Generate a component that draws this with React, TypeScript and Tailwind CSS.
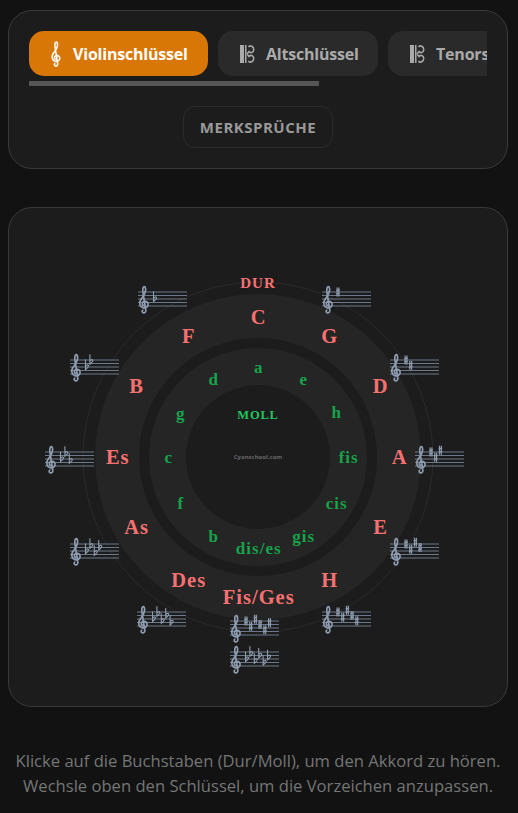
import React from "react";

const trebleD =
  "M6.2 13.6C4.2 13.6 3.4 10.6 5.6 9.6C8.6 8.4 10.6 11 10 13.4C9.4 15.6 6.6 16.4 4.4 15.4C1.8 14.2 1 11 2.6 8C3.8 5.6 7.2 3 7.6 -1.6C7.8 -4 7 -5.6 6.2 -5.4C5 -5.2 4.4 -2.6 5 .6L7.8 18C8.2 20.4 6.4 21.2 5 20.6C3.8 20 3.8 18 5.4 18";

const SHARP_Y = [0, 5.25, -1.75, 3.5, 8.75, 1.75, 7];
const FLAT_Y = [7, 1.75, 8.75, 3.5, 10.5, 5.25];

const major = [
  { t: "C", x: 0, y: -140 },
  { t: "F", x: -70, y: -121 },
  { t: "G", x: 71, y: -121 },
  { t: "B", x: -122, y: -71 },
  { t: "D", x: 122, y: -71 },
  { t: "Es", x: -141, y: 0 },
  { t: "A", x: 141, y: 0 },
  { t: "As", x: -122, y: 70 },
  { t: "E", x: 122, y: 70 },
  { t: "Des", x: -70, y: 123 },
  { t: "H", x: 71, y: 123 },
  { t: "Fis/Ges", x: 0, y: 140 },
];

const minor = [
  { t: "a", x: 0, y: -90 },
  { t: "d", x: -45, y: -78 },
  { t: "e", x: 45, y: -78 },
  { t: "g", x: -78, y: -44 },
  { t: "h", x: 78, y: -45 },
  { t: "c", x: -90, y: 0 },
  { t: "fis", x: 90, y: 0 },
  { t: "f", x: -78, y: 46 },
  { t: "cis", x: 78, y: 46 },
  { t: "b", x: -45, y: 79 },
  { t: "gis", x: 45, y: 79 },
  { t: "dis/es", x: 0, y: 91 },
];

// x, y = top-left of the staff, relative to the wheel centre
const staves = [
  { x: -120, y: -165, flats: 1, sharps: 0 },
  { x: 64, y: -165, flats: 0, sharps: 1 },
  { x: -188, y: -97, flats: 2, sharps: 0 },
  { x: 132, y: -97, flats: 0, sharps: 2 },
  { x: -213, y: -5, flats: 3, sharps: 0 },
  { x: 157, y: -5, flats: 0, sharps: 3 },
  { x: -188, y: 87, flats: 4, sharps: 0 },
  { x: 132, y: 87, flats: 0, sharps: 4 },
  { x: -121, y: 155, flats: 5, sharps: 0 },
  { x: 64, y: 155, flats: 0, sharps: 5 },
  { x: -28, y: 164, flats: 0, sharps: 6 },
  { x: -28, y: 195, flats: 6, sharps: 0 },
];

function Staff({ x, y, flats, sharps }: { x: number; y: number; flats: number; sharps: number }) {
  return (
    <g transform={`translate(${x} ${y})`}>
      {[0, 3.5, 7, 10.5, 14].map((l) => (
        <line key={l} x1="0" x2="49" y1={l} y2={l} stroke="#6b7889" strokeWidth="1" />
      ))}
      <path d={trebleD} fill="none" stroke="#8f9db0" strokeWidth="1.7" />
      {FLAT_Y.slice(0, flats).map((fy, i) => (
        <path
          key={i}
          transform={`translate(${15.5 + i * 4.4} ${fy})`}
          d="M0 -7.5V2.5C1.6 1.2 3.4 -.2 3 -1.4C2.6 -2.8 .9 -1.9 0 -.8"
          fill="none"
          stroke="#8f9db0"
          strokeWidth="1.1"
        />
      ))}
      {SHARP_Y.slice(0, sharps).map((sy, i) => (
        <path
          key={i}
          transform={`translate(${16 + i * 4.7} ${sy})`}
          d="M-.9 -4.5V4.5M.9 -4.5V4.5M-1.8 -1.2L1.8 -2.2M-1.8 2.2L1.8 1.2"
          fill="none"
          stroke="#8f9db0"
          strokeWidth="1.2"
        />
      ))}
    </g>
  );
}

function Wheel() {
  return (
    <svg width="498" height="498" viewBox="-249 -249 498 498" className="font-['Liberation_Serif',serif] font-bold">
      <circle r="175" fill="none" stroke="#2a2a2a" strokeWidth="1" />
      <circle r="163" fill="#252525" />
      <circle r="119" fill="#1c1c1c" />
      <circle r="109" fill="#252525" />
      <circle r="72" fill="#1c1c1c" />
      {staves.map((s) => (
        <Staff key={`${s.x}${s.y}`} {...s} />
      ))}
      <text y="-174" textAnchor="middle" dominantBaseline="central" className="fill-[#f87171] text-[15px] tracking-[1px]">
        DUR
      </text>
      <text y="-42" textAnchor="middle" dominantBaseline="central" className="fill-[#22c55e] text-[12.5px] tracking-[0.8px]">
        MOLL
      </text>
      <text textAnchor="middle" dominantBaseline="central" className="fill-[#666666] text-[6px] font-['Open_Sans',sans-serif]">
        Cyanschool.com
      </text>
      {major.map((m) => (
        <text key={m.t} x={m.x + 0.7} y={m.y} textAnchor="middle" dominantBaseline="central" className="fill-[#f87171] text-[20.5px] tracking-[1px]">
          {m.t}
        </text>
      ))}
      {minor.map((m) => (
        <text key={m.t} x={m.x + 0.7} y={m.y} textAnchor="middle" dominantBaseline="central" className="fill-[#16a34a] text-[17px] tracking-[1px]">
          {m.t}
        </text>
      ))}
    </svg>
  );
}

function TrebleIcon() {
  return (
    <svg width="14" height="26" viewBox="0 -6.5 12 28.5" className="shrink-0">
      <path d={trebleD} fill="none" stroke="#ffffff" strokeWidth="1.7" />
    </svg>
  );
}

function CClefIcon() {
  return (
    <svg width="18" height="20" viewBox="0 0 18 20" className="shrink-0">
      <rect x="2" y="1" width="4" height="18" fill="#aaaaaa" />
      <rect x="7" y="1" width="1.5" height="18" fill="#aaaaaa" />
      <path
        d="M9 10L11 7.5C12 9 15.5 9.5 15.7 5.5C15.8 2.5 12 .6 10.5 3M9 10L11 12.5C12 11 15.5 10.5 15.7 14.5C15.8 17.5 12 19.4 10.5 17"
        fill="none"
        stroke="#aaaaaa"
        strokeWidth="1.5"
      />
    </svg>
  );
}

function ClefTab({ label, active, icon, width }: { label: string; active?: boolean; icon: React.ReactNode; width: string }) {
  return (
    <button
      className={`flex h-[45px] shrink-0 items-center gap-[10px] rounded-[15px] px-5 text-[16px] font-bold tracking-[-0.2px] ${width} ${
        active ? "bg-[#d97706] text-white" : "bg-[#2a2a2a] text-[#aaaaaa]"
      }`}
    >
      {icon}
      {label}
    </button>
  );
}

export default function App() {
  return (
    <div className="min-h-screen bg-[#121212] pl-2 pr-[10px] pt-[10px] font-['Open_Sans',sans-serif]">
      <section className="rounded-[24px] border border-[#3a3a3a] bg-[#1c1c1c] p-5">
        <div className="overflow-hidden">
          <div className="flex gap-[10px]">
            <ClefTab label="Violinschlüssel" active icon={<TrebleIcon />} width="w-[179px]" />
            <ClefTab label="Altschlüssel" icon={<CClefIcon />} width="w-[160px]" />
            <ClefTab label="Tenorschlüssel" icon={<CClefIcon />} width="w-[176px]" />
          </div>
        </div>
        <div className="mt-[5px] h-[5px] w-[290px] bg-[#555555]" />
        <div className="mt-5 flex justify-center">
          <button className="h-[42px] w-[150px] rounded-[12px] border border-[#2c2c2c] text-[15px] font-bold tracking-[0.5px] text-[#999999]">
            MERKSPRÜCHE
          </button>
        </div>
      </section>

      <section className="mt-[38px] flex h-[500px] items-center justify-center overflow-hidden rounded-[24px] border border-[#3a3a3a] bg-[#1c1c1c]">
        <Wheel />
      </section>

      <p className="mt-[41px] text-center text-[16.6px] leading-[25px] text-[#747676]">
        Klicke auf die Buchstaben (Dur/Moll), um den Akkord zu hören.
        <br />
        Wechsle oben den Schlüssel, um die Vorzeichen anzupassen.
      </p>
    </div>
  );
}
